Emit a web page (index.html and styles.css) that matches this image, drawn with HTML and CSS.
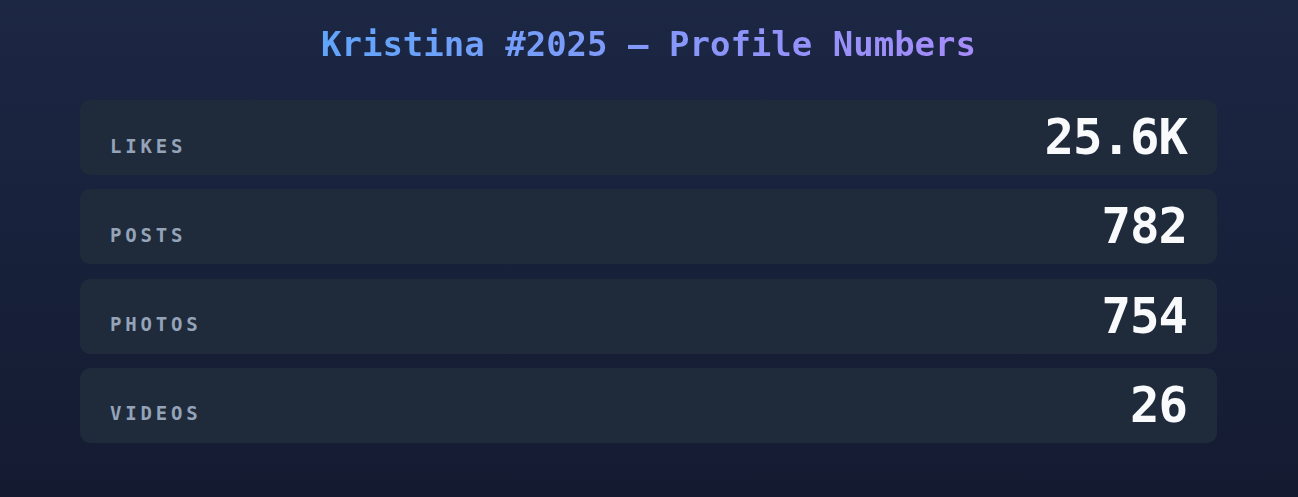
FILE: index.html
```html
<!DOCTYPE html>
<html lang="en">
<head>
<meta charset="utf-8">
<title>Kristina #2025 — Profile Numbers</title>
<link rel="stylesheet" href="styles.css">
</head>
<body>
<main class="page">
  <h1 class="title">Kristina #2025 — Profile Numbers</h1>
  <section class="stats">
    <div class="stat"><span class="label">LIKES</span><span class="value">25.6K</span></div>
    <div class="stat"><span class="label">POSTS</span><span class="value">782</span></div>
    <div class="stat"><span class="label">PHOTOS</span><span class="value">754</span></div>
    <div class="stat"><span class="label">VIDEOS</span><span class="value">26</span></div>
  </section>
</main>
</body>
</html>
```
FILE: styles.css
```css
html, body {
  margin: 0;
  height: 100%;
}
body {
  background: linear-gradient(180deg, #1c2744 0%, #141b31 100%);
  font-family: "DejaVu Sans Mono", "Liberation Mono", monospace;
  color: #f8fafc;
}
.page {
  padding: 22px 81px 0 80px;
}
.title {
  margin: 0 auto 34px;
  text-align: center;
  font-size: 34px;
  line-height: 44px;
  font-weight: bold;
  background: linear-gradient(90deg, #60a5fa 0%, #a78bfa 100%);
  -webkit-background-clip: text;
  background-clip: text;
  color: transparent;
  width: fit-content;
}
.stats {
  display: flex;
  flex-direction: column;
  gap: 14.3px;
}
.stat {
  height: 75px;
  box-sizing: border-box;
  background: #1f2a3b;
  border-radius: 10px;
  display: flex;
  align-items: center;
  justify-content: space-between;
  padding: 0 30px;
}
.label {
  font-size: 19px;
  font-weight: bold;
  letter-spacing: 3.8px;
  color: #94a3b8;
  padding-top: 16px;
}
.value {
  font-size: 49px;
  font-weight: bold;
  letter-spacing: -1px;
  line-height: 1;
  color: #f8fafc;
}
```
